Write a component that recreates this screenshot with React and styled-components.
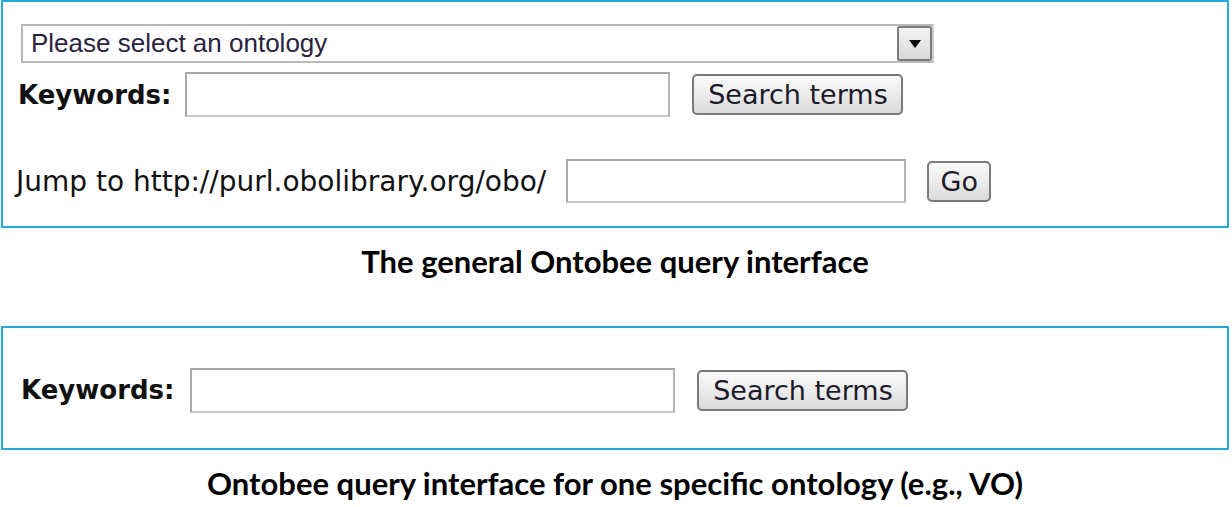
import styled, { createGlobalStyle } from 'styled-components'

const GlobalStyle = createGlobalStyle`
  html, body {
    margin: 0;
    padding: 0;
    background: #ffffff;
  }
`

const Page = styled.div`
  width: 1232px;
  height: 507px;
  display: flex;
  flex-direction: column;
  background: #fff;
  overflow: hidden;
  & > * {
    flex-shrink: 0;
  }
`

const Panel = styled.section`
  box-sizing: border-box;
  margin-left: 1px;
  margin-top: ${(p) => p.mt || 0}px;
  width: 1228px;
  height: ${(p) => p.h}px;
  border: 2px solid #25a9df;
  display: flex;
  flex-direction: column;
  justify-content: ${(p) => (p.center ? 'center' : 'flex-start')};
  padding-top: ${(p) => p.pt || 0}px;
`

const Row = styled.div`
  display: flex;
  align-items: center;
  margin-top: ${(p) => p.mt || 0}px;
`

const Label = styled.span`
  font-family: 'DejaVu Sans', Verdana, sans-serif;
  font-size: ${(p) => (p.bold ? 26 : 28)}px;
  font-weight: ${(p) => (p.bold ? 700 : 400)};
  color: #111;
  margin-left: ${(p) => p.ml || 0}px;
  margin-right: ${(p) => p.mr || 0}px;
  white-space: nowrap;
`

const SelectBox = styled.div`
  box-sizing: border-box;
  width: 913px;
  height: 39px;
  margin-left: 18px;
  border: 2px solid #b9b9b9;
  border-right-color: #d0d0d0;
  display: flex;
  align-items: center;
  justify-content: space-between;
  background: #fff;
`

const SelectText = styled.span`
  font-family: 'Liberation Sans', Arial, sans-serif;
  font-size: 26px;
  color: #2a2340;
  padding-left: 8px;
`

const ArrowBox = styled.div`
  box-sizing: border-box;
  width: 35px;
  height: 35px;
  border: 2px solid #7b7b7b;
  border-radius: 2px;
  background: linear-gradient(#f4f4f4, #d8d8d8);
  display: flex;
  align-items: center;
  justify-content: center;
`

const TextInput = styled.div`
  box-sizing: border-box;
  width: ${(p) => p.w}px;
  height: ${(p) => p.hh || 45}px;
  border: 2px solid #b4b4b4;
  border-top-color: #a5a5a5;
  border-left-color: #a8a8a8;
  border-bottom-color: #c8c8c8;
  background: #fff;
`

const Button = styled.div`
  box-sizing: border-box;
  width: ${(p) => p.w}px;
  height: 41px;
  margin-left: ${(p) => p.ml}px;
  border: 2px solid #7a7a7a;
  border-radius: 5px;
  background: linear-gradient(#fafafa 0%, #ececec 50%, #d9d9d9 100%);
  display: flex;
  align-items: center;
  justify-content: center;
  font-family: 'DejaVu Sans', Verdana, sans-serif;
  font-size: 27px;
  color: #1c1a2a;
`

const Caption = styled.div`
  font-family: Lato, 'Open Sans', sans-serif;
  font-weight: 700;
  font-size: 31px;
  text-align: center;
  color: #000;
  width: 1230px;
  margin-top: ${(p) => p.mt}px;
  line-height: 1;
`

export default function App() {
  return (
    <Page>
      <GlobalStyle />
      <Panel h={228} pt={22}>
        <SelectBox>
          <SelectText>Please select an ontology</SelectText>
          <ArrowBox>
            <svg width="12" height="8" viewBox="0 0 12 8">
              <path d="M0 0 H12 L6 8 Z" fill="#000" />
            </svg>
          </ArrowBox>
        </SelectBox>
        <Row mt={9}>
          <Label bold ml={15} mr={14}>Keywords:</Label>
          <TextInput w={485} />
          <Button w={211} ml={22}>Search terms</Button>
        </Row>
        <Row mt={42}>
          <Label ml={13} mr={20}>Jump to http://purl.obolibrary.org/obo/</Label>
          <TextInput w={340} hh={44} />
          <Button w={64} ml={21}>Go</Button>
        </Row>
      </Panel>
      <Caption mt={18}>The general Ontobee query interface</Caption>
      <Panel h={124} mt={49} pt={4} center>
        <Row>
          <Label bold ml={18} mr={16}>Keywords:</Label>
          <TextInput w={485} />
          <Button w={211} ml={22}>Search terms</Button>
        </Row>
      </Panel>
      <Caption mt={18}>Ontobee query interface for one specific ontology (e.g., VO)</Caption>
    </Page>
  )
}
